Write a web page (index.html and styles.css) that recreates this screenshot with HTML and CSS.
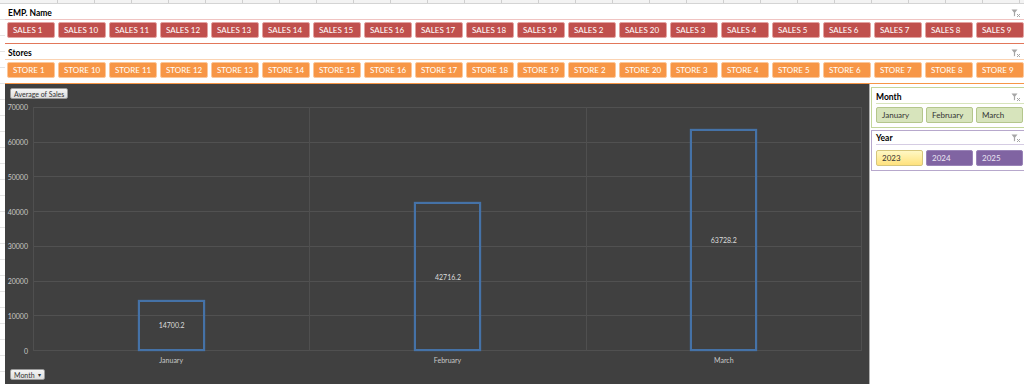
FILE: index.html
```html
<!DOCTYPE html>
<html lang="en">
<head>
  <meta charset="UTF-8">
  <title>Sales Dashboard</title>
  <link rel="stylesheet" href="styles.css">
</head>
<body>

<div class="colhead"></div>

<div class="sheet">
  <div class="rowhead"></div>

  <div class="content">
    <section class="slicer slicer-emp">
      <div class="slicer-title">EMP. Name
        <svg class="filter-icon" viewBox="0 0 10 9"><path d="M0.5 0.5h6l-2.4 3v3.2l-1.2 0.8v-4z" fill="#a6a6a6"/><path d="M6 5l3 3M9 5l-3 3" stroke="#a6a6a6" stroke-width="1"/></svg>
      </div>
      <div class="slicer-items">
        <button>SALES 1</button><button>SALES 10</button><button>SALES 11</button><button>SALES 12</button>
        <button>SALES 13</button><button>SALES 14</button><button>SALES 15</button><button>SALES 16</button>
        <button>SALES 17</button><button>SALES 18</button><button>SALES 19</button><button>SALES 2</button>
        <button>SALES 20</button><button>SALES 3</button><button>SALES 4</button><button>SALES 5</button>
        <button>SALES 6</button><button>SALES 7</button><button>SALES 8</button><button>SALES 9</button>
      </div>
    </section>

    <section class="slicer slicer-store">
      <div class="slicer-title">Stores
        <svg class="filter-icon" viewBox="0 0 10 9"><path d="M0.5 0.5h6l-2.4 3v3.2l-1.2 0.8v-4z" fill="#a6a6a6"/><path d="M6 5l3 3M9 5l-3 3" stroke="#a6a6a6" stroke-width="1"/></svg>
      </div>
      <div class="slicer-items">
        <button>STORE 1</button><button>STORE 10</button><button>STORE 11</button><button>STORE 12</button>
        <button>STORE 13</button><button>STORE 14</button><button>STORE 15</button><button>STORE 16</button>
        <button>STORE 17</button><button>STORE 18</button><button>STORE 19</button><button>STORE 2</button>
        <button>STORE 20</button><button>STORE 3</button><button>STORE 4</button><button>STORE 5</button>
        <button>STORE 6</button><button>STORE 7</button><button>STORE 8</button><button>STORE 9</button>
      </div>
    </section>

    <div class="bottom">
      <div class="chart">
        <div class="chart-head">
          <span class="field-btn">Average of Sales</span>
        </div>

        <div class="chart-body">
          <div class="y-axis">
            <span>70000</span><span>60000</span><span>50000</span><span>40000</span>
            <span>30000</span><span>20000</span><span>10000</span><span>0</span>
          </div>
          <div class="plot">
            <div class="gridlines">
              <div></div><div></div><div></div><div></div><div></div><div></div><div></div>
            </div>
            <div class="bars">
              <div class="cat"><div class="bar" style="height: 21.0%"><span>14700.2</span></div></div>
              <div class="cat"><div class="bar" style="height: 61.02%"><span>42716.2</span></div></div>
              <div class="cat"><div class="bar" style="height: 91.04%"><span>63728.2</span></div></div>
            </div>
          </div>
        </div>

        <div class="x-axis">
          <span>January</span><span>February</span><span>March</span>
        </div>

        <div class="chart-foot">
          <span class="field-btn">Month <span class="caret">&#9662;</span></span>
        </div>
      </div>

      <div class="side">
        <section class="side-slicer side-month">
          <div class="side-title">Month
            <svg class="filter-icon" viewBox="0 0 10 9"><path d="M0.5 0.5h6l-2.4 3v3.2l-1.2 0.8v-4z" fill="#a6a6a6"/><path d="M6 5l3 3M9 5l-3 3" stroke="#a6a6a6" stroke-width="1"/></svg>
          </div>
          <div class="side-items">
            <button>January</button><button>February</button><button>March</button>
          </div>
        </section>

        <section class="side-slicer side-year">
          <div class="side-title">Year
            <svg class="filter-icon" viewBox="0 0 10 9"><path d="M0.5 0.5h6l-2.4 3v3.2l-1.2 0.8v-4z" fill="#a6a6a6"/><path d="M6 5l3 3M9 5l-3 3" stroke="#a6a6a6" stroke-width="1"/></svg>
          </div>
          <div class="side-items">
            <button class="selected">2023</button><button>2024</button><button>2025</button>
          </div>
        </section>
      </div>
    </div>
  </div>
</div>

</body>
</html>
```

FILE: styles.css
```css
body, html {
  margin: 0;
  padding: 0;
  height: 100%;
  overflow: hidden;
  background: #fff;
  font-family: Lato, "Open Sans", sans-serif;
}

.colhead {
  height: 3px;
  background-color: #f3f3f3;
  background-image: repeating-linear-gradient(90deg, transparent 0, transparent 36px, #cfcfcf 36px, #cfcfcf 37px);
  background-position: 21px 0;
  border-bottom: 1px solid #d4d4d4;
}

.sheet {
  display: flex;
  height: 380px;
}

.rowhead {
  width: 5px;
  flex-shrink: 0;
  background-image: repeating-linear-gradient(180deg, transparent 0, transparent 15px, #e4e4e4 15px, #e4e4e4 16px);
}

.content {
  flex: 1;
  display: flex;
  flex-direction: column;
  min-width: 0;
}

/* top slicers */
.slicer {
  padding: 3px 0 5px;
}

.slicer-emp {
  border-bottom: 1px solid #e2775a;
}

.slicer-store {
  border-bottom: 1px solid #f79646;
}

.slicer-title {
  height: 12px;
  line-height: 11px;
  padding-left: 3px;
  margin-bottom: 2px;
  font-size: 8.5px;
  font-weight: bold;
  color: #000;
  display: flex;
  align-items: center;
  justify-content: space-between;
}

.slicer-emp .slicer-title {
  border-bottom: 1px solid #f0c4c2;
}

.slicer-store .slicer-title {
  border-bottom: 1px solid #fbd3b3;
}

.filter-icon {
  width: 10px;
  height: 9px;
  margin-right: 3px;
}

.slicer-items {
  display: flex;
  gap: 3px;
  padding-left: 2px;
  overflow: hidden;
}

.slicer-items button {
  flex: 0 0 48px;
  height: 16px;
  padding: 0 0 0 5px;
  border: 1px solid #e3a3a1;
  border-radius: 2px;
  background-color: #c0504d;
  color: #fff;
  font-family: Lato, "Open Sans", sans-serif;
  font-size: 8px;
  text-align: left;
  white-space: nowrap;
  overflow: hidden;
}

.slicer-store .slicer-items button {
  background-color: #f79646;
  border-color: #fbc79b;
}

/* chart + side panel */
.bottom {
  flex: 1;
  display: flex;
  min-height: 0;
}

.chart {
  width: 864px;
  flex-shrink: 0;
  box-sizing: border-box;
  background-color: #404040;
  padding: 4px 7px 4px 5px;
  display: flex;
  flex-direction: column;
}

.chart-head, .chart-foot {
  height: 11px;
  display: flex;
}

.field-btn {
  display: inline-flex;
  align-items: center;
  height: 11px;
  box-sizing: border-box;
  padding: 0 3px;
  background: linear-gradient(#f4f4f4, #dedede);
  border: 1px solid #9a9a9a;
  border-radius: 2px;
  color: #333;
  font-size: 7px;
  white-space: nowrap;
}

.caret {
  margin-left: 3px;
  font-size: 6px;
}

.chart-body {
  display: flex;
  height: 244px;
  margin-top: 8px;
}

.y-axis {
  width: 23px;
  flex-shrink: 0;
  box-sizing: border-box;
  padding-right: 5px;
  margin: -4px 0;
  display: flex;
  flex-direction: column;
  justify-content: space-between;
  align-items: flex-end;
  color: #c8c8c8;
  font-size: 7px;
  line-height: 8px;
}

.plot {
  flex: 1;
  display: grid;
}

.gridlines, .bars {
  grid-area: 1 / 1;
}

.gridlines {
  display: flex;
  flex-direction: column;
  border-bottom: 1px solid #505050;
}

.gridlines div {
  flex: 1;
  border-top: 1px solid #515151;
}

.bars {
  display: grid;
  grid-template-columns: repeat(3, 1fr);
}

.cat {
  display: flex;
  justify-content: center;
  align-items: flex-end;
  border-left: 1px solid #4f4f4f;
}

.cat:last-child {
  border-right: 1px solid #4f4f4f;
}

.bar {
  width: 67px;
  box-sizing: border-box;
  border: 2px solid #4572a7;
  box-shadow: 0 0 1px #4572a7;
  display: flex;
  align-items: center;
  justify-content: center;
  color: #dcdcdc;
  font-size: 7px;
}

.x-axis {
  display: grid;
  grid-template-columns: repeat(3, 1fr);
  margin: 4px 0 4px 23px;
  height: 10px;
  line-height: 10px;
  text-align: center;
  color: #c8c8c8;
  font-size: 7px;
}

.side {
  flex: 1;
  border-left: 1px solid #b0b0b0;
  background: #fff;
  padding-left: 1px;
  overflow: hidden;
}

.side-slicer {
  padding: 4px 0 4px 4px;
  border: 1px solid #c3d69b;
  border-right: none;
}

.side-month {
  margin-top: 3px;
}

.side-year {
  margin-top: 2px;
  padding-top: 2px;
  border-color: #b7a8cc;
}

.side-title {
  height: 11px;
  line-height: 11px;
  font-size: 8.5px;
  font-weight: bold;
  color: #000;
  display: flex;
  justify-content: space-between;
  align-items: center;
  margin-bottom: 3px;
  border-bottom: 1px solid #d7e4bc;
}

.side-year .side-title {
  margin-bottom: 5px;
  border-bottom-color: #d5cce3;
}

.side-items {
  display: flex;
  gap: 3px;
}

.side-items button {
  flex: 0 0 47px;
  height: 16px;
  padding: 0 0 0 5px;
  border: 1px solid #b4c68c;
  border-radius: 2px;
  background-color: #d7e4bc;
  color: #333;
  font-family: Lato, "Open Sans", sans-serif;
  font-size: 8px;
  text-align: left;
  white-space: nowrap;
}

.side-year .side-items button {
  background-color: #8064a2;
  border-color: #9a84b8;
  color: #ece6f3;
}

.side-year .side-items button.selected {
  background: linear-gradient(#fff8c4, #ffe27d);
  border-color: #d6c67c;
  color: #333;
}
```
